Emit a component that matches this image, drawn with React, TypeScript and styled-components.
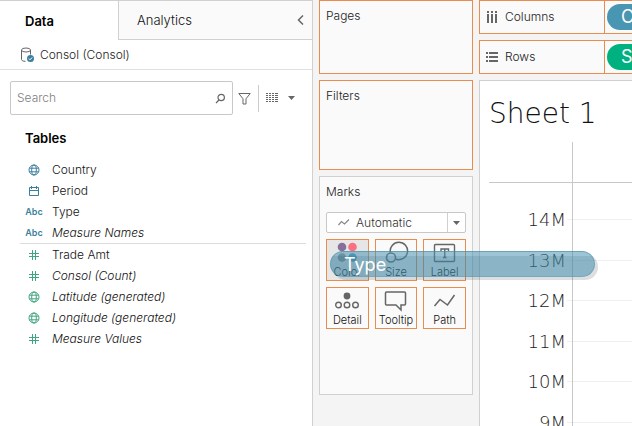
import React from "react";
import styled, { createGlobalStyle, css } from "styled-components";

const ORANGE = "#eb8c4f";
const LINE = "#d0d0d0";
const BLUE = "#3b7f9e";
const GREEN = "#3fa57e";
const ICON = "#666";

const GlobalStyle = createGlobalStyle`
  * { box-sizing: border-box; }
  body {
    margin: 0;
    overflow: hidden;
    font-family: Inter, Roboto, sans-serif;
    font-size: 12px;
    font-weight: 300;
    line-height: 16px;
    color: #111;
  }
  button, input { font: inherit; color: inherit; }
  button { padding: 0; border: 0; background: none; cursor: pointer; }
  svg { display: block; flex: none; }
`;

const Workspace = styled.div`
  display: grid;
  grid-template-columns: 313px 166px minmax(0, 1fr);
  height: 100vh;
  overflow: hidden;
  background: #f4f4f4;
`;

/* ---------- Data pane ---------- */

const DataPane = styled.aside`
  display: flex;
  flex-direction: column;
  border-top: 1px solid ${LINE};
  border-right: 1px solid ${LINE};
  background: #fff;
`;

const TabBar = styled.div`
  display: flex;
  height: 39px;
`;

const Tab = styled.button<{ $active?: boolean }>`
  font-size: 13px;
  ${(p) =>
    p.$active
      ? css`
          width: 118px;
          padding: 0 0 0 25px;
          text-align: left;
          font-weight: 600;
          color: #000;
        `
      : css`
          padding: 0 0 0 18px;
          border-left: 1px solid ${LINE};
          border-bottom: 1px solid ${LINE};
          background: #fafafa;
        `}
`;

const CollapseButton = styled.button`
  display: flex;
  flex: 1;
  align-items: center;
  justify-content: flex-end;
  padding-right: 8px;
  border-bottom: 1px solid ${LINE};
  background: #fafafa;
`;

const DataSource = styled.div`
  display: flex;
  align-items: center;
  gap: 6px;
  height: 30px;
  padding-left: 20px;
  border-bottom: 1px solid #e0e0e0;
  color: #222;
`;

const SearchRow = styled.div`
  display: flex;
  align-items: center;
  height: 34px;
  margin: 11px 17px 0 10px;
`;

const SearchField = styled.label`
  display: flex;
  flex: 1;
  align-items: center;
  height: 34px;
  min-width: 0;
  padding: 0 6px;
  border: 1px solid #c8c8c8;
  border-radius: 2px;
`;

const SearchInput = styled.input`
  flex: 1;
  min-width: 0;
  padding: 0;
  border: 0;
  outline: 0;
  background: none;
  &::placeholder { color: #808080; opacity: 1; }
`;

const FilterButton = styled.button`
  padding: 0 7px 0 5px;
`;

const ViewButton = styled.button`
  display: flex;
  align-items: center;
  gap: 10px;
  height: 27px;
  padding-left: 7px;
  border-left: 1px solid #ccc;
`;

const SectionTitle = styled.h2`
  margin: 14px 0 12px 25px;
  font-size: 13px;
  line-height: 18px;
  font-weight: 600;
  color: #000;
`;

const FieldList = styled.ul`
  margin: 0 6px 0 20px;
  padding: 0;
  list-style: none;
  & + & { border-top: 1px solid #dcdcdc; }
`;

const Field = styled.li<{ $italic?: boolean }>`
  display: grid;
  grid-template-columns: 28px 1fr;
  column-gap: 4px;
  align-items: center;
  height: 21px;
  font-style: ${(p) => (p.$italic ? "italic" : "normal")};
`;

const FieldIcon = styled.span<{ $color: string }>`
  display: flex;
  justify-content: center;
  color: ${(p) => p.$color};
  font-size: 9px;
  font-style: normal;
  font-weight: 600;
`;

/* ---------- Cards ---------- */

const CardColumn = styled.div`
  display: flex;
  flex-direction: column;
  gap: 6px;
  padding: 0 6px;
`;

const Card = styled.section<{ $height: number; $drop?: boolean }>`
  height: ${(p) => p.$height}px;
  padding: 6px;
  border: 1px solid ${(p) => (p.$drop ? ORANGE : LINE)};
  background: #fafafa;
`;

const CardTitle = styled.h3`
  margin: 0;
  font-size: 12px;
  line-height: 18px;
  font-weight: 300;
  color: #222;
`;

const MarkType = styled.button`
  display: flex;
  align-items: center;
  width: 100%;
  height: 21px;
  margin: 11px 0 6px;
  border: 1px solid #c8c8c8;
  border-radius: 2px;
  background: #fff;
  color: #333;
`;

const MarkTypeLabel = styled.span`
  flex: 1;
  padding-left: 6px;
  text-align: left;
`;

const MarkTypeArrow = styled.span`
  display: flex;
  align-items: center;
  justify-content: center;
  width: 18px;
  height: 19px;
  border-left: 1px solid ${LINE};
`;

const MarkGrid = styled.div`
  display: grid;
  grid-template-columns: repeat(3, minmax(0, 1fr));
  gap: 6px;
`;

const MarkButton = styled.button<{ $hot?: boolean }>`
  display: flex;
  flex-direction: column;
  align-items: center;
  justify-content: space-between;
  height: 42px;
  border: 1px solid ${ORANGE};
  background: ${(p) => (p.$hot ? "#e6e6e6" : "#fafafa")};
  font-size: 11px;
  line-height: 16px;
  white-space: nowrap;
`;

const DragPill = styled.div`
  position: absolute;
  left: 330px;
  top: 251px;
  width: 265px;
  height: 26px;
  padding-left: 13px;
  border: 1px solid rgba(72, 145, 174, 0.5);
  border-radius: 13px;
  background: linear-gradient(rgba(75, 148, 178, 0.55) 4px, rgba(62, 132, 160, 0.6) 4px);
  box-shadow: 3px 3px 0 rgba(0, 0, 0, 0.13);
  color: #fff;
  font-size: 18px;
  font-weight: 400;
  line-height: 25px;
`;

/* ---------- Shelves and view ---------- */

const Main = styled.main`
  display: flex;
  flex-direction: column;
  gap: 6px;
  min-width: 0;
`;

const Shelf = styled.div`
  display: flex;
  height: 34px;
  border: 1px solid ${ORANGE};
  border-right: 0;
  background: #fafafa;
`;

const ShelfLabel = styled.div`
  display: flex;
  flex: none;
  align-items: center;
  gap: 7px;
  width: 125px;
  padding-left: 6px;
  border-right: 1px solid ${ORANGE};
  color: #222;
`;

const ShelfTrack = styled.div`
  flex: 1;
  min-width: 0;
  padding: 3px 0 0 2px;
  overflow: hidden;
`;

const ShelfPill = styled.div<{ $color: string }>`
  width: 240px;
  height: 26px;
  padding-left: 14px;
  border-radius: 13px;
  background: ${(p) => p.$color};
  color: #fff;
  font-size: 18px;
  font-weight: 400;
  line-height: 26px;
`;

const Sheet = styled.section`
  display: flex;
  flex: 1;
  flex-direction: column;
  min-height: 0;
  padding-left: 9px;
  border-top: 1px solid ${LINE};
  border-left: 1px solid ${LINE};
  background: #fff;
`;

const SheetTitle = styled.h1`
  margin: 12px 0 9px;
  font-family: "DejaVu Sans", sans-serif;
  font-size: 28px;
  line-height: 42px;
  height: 40px;
  font-weight: 200;
  color: #111;
`;

const Chart = styled.svg`
  flex: 1;
  width: 100%;
  min-height: 0;
  font-family: "DejaVu Sans", sans-serif;
  font-size: 18px;
  font-weight: 200;
`;

/* ---------- Icons ---------- */

const Globe = () => (
  <svg width="12" height="12" viewBox="0 0 12 12" fill="none" stroke="currentColor">
    <circle cx="6" cy="6" r="5" />
    <ellipse cx="6" cy="6" rx="2.3" ry="5" />
    <path d="M1.5 4.2h9M1.5 7.8h9" />
  </svg>
);
const Calendar = () => (
  <svg width="12" height="12" viewBox="0 0 12 12" fill="none" stroke="currentColor">
    <path d="M1.5 2.5h9v8h-9zM1.5 5.5h9M3.5 1v3M8.5 1v3" />
  </svg>
);
const Hash = () => (
  <svg width="12" height="12" viewBox="0 0 12 12" fill="none" stroke="currentColor">
    <path d="M1 4.5h10M1 7.5h10M4.5 1v10M7.5 1v10" />
  </svg>
);
const Caret = () => (
  <svg width="7" height="4" viewBox="0 0 7 4" fill={ICON}>
    <path d="M0 0h7L3.5 4z" />
  </svg>
);
const Database = () => (
  <svg width="14" height="16" viewBox="0 0 14 16" fill="none" stroke={ICON}>
    <ellipse cx="6" cy="3" rx="4.5" ry="2" />
    <path d="M1.5 3v9.5c0 1 1.8 1.8 4 1.9M10.5 3v4.5" />
    <circle cx="10.5" cy="11.5" r="3.5" fill={BLUE} stroke="none" />
    <path d="M8.8 11.5l1.2 1.3 2.2-2.4" stroke="#fff" />
  </svg>
);

type FieldData = { name: string; kind: "globe" | "date" | "abc" | "num"; italic?: boolean };

const dimensions: FieldData[] = [
  { name: "Country", kind: "globe" },
  { name: "Period", kind: "date" },
  { name: "Type", kind: "abc" },
  { name: "Measure Names", kind: "abc", italic: true },
];
const measures: FieldData[] = [
  { name: "Trade Amt", kind: "num" },
  { name: "Consol (Count)", kind: "num", italic: true },
  { name: "Latitude (generated)", kind: "globe", italic: true },
  { name: "Longitude (generated)", kind: "globe", italic: true },
  { name: "Measure Values", kind: "num", italic: true },
];
const kindIcon = { globe: <Globe />, date: <Calendar />, abc: "Abc", num: <Hash /> };

const Fields = ({ items, color }: { items: FieldData[]; color: string }) => (
  <FieldList>
    {items.map((f) => (
      <Field key={f.name} $italic={f.italic}>
        <FieldIcon $color={color}>{kindIcon[f.kind]}</FieldIcon>
        {f.name}
      </Field>
    ))}
  </FieldList>
);

const marks = [
  {
    name: "Color",
    icon: (
      <>
        <circle cx="8" cy="7" r="4.3" fill="#876f99" />
        <circle cx="18.5" cy="7" r="4.3" fill="#fb6f80" />
        <circle cx="8" cy="17.5" r="4.3" fill="#8e8e8e" />
        <circle cx="18.5" cy="17.5" r="4.3" fill="#4d94bd" />
      </>
    ),
  },
  {
    name: "Size",
    icon: (
      <g fill="none" stroke={ICON} strokeWidth="1.5">
        <path d="M8.3 12.5A8.7 8.7 0 1 1 14 19.2" />
        <circle cx="9" cy="17.5" r="4.5" />
      </g>
    ),
  },
  {
    name: "Label",
    icon: (
      <g fill="none" stroke={ICON} strokeWidth="1.4">
        <rect x="3.5" y="4.5" width="20" height="17" rx="1" />
        <path d="M10 11V9h7.5v2M13.75 9v8.5M12 17.5h3.5" />
      </g>
    ),
  },
  {
    name: "Detail",
    icon: (
      <g fill="none" stroke={ICON} strokeWidth="1.4">
        <circle cx="13" cy="8" r="3.4" fill={ICON} stroke="none" />
        <circle cx="4.5" cy="17" r="2.8" />
        <circle cx="13" cy="17" r="2.8" />
        <circle cx="21.5" cy="17" r="2.8" />
      </g>
    ),
  },
  {
    name: "Tooltip",
    icon: (
      <path
        d="M4.5 4h18a1 1 0 0 1 1 1v11a1 1 0 0 1-1 1H19v5l-5-5H4.5a1 1 0 0 1-1-1V5a1 1 0 0 1 1-1z"
        fill="none"
        stroke={ICON}
        strokeWidth="1.5"
      />
    ),
  },
  {
    name: "Path",
    icon: <path d="M3.5 18L9 11.5l7.5 5.500 7-10" fill="none" stroke={ICON} strokeWidth="1.5" />,
  },
];

const ticks = [14, 13, 12, 11, 10, 9];
const tickY = (i: number) => Math.round(77 + i * 40.6);

export default function App() {
  return (
    <>
      <GlobalStyle />
      <Workspace>
        <DataPane>
          <TabBar>
            <Tab $active>Data</Tab>
            <Tab>Analytics</Tab>
            <CollapseButton aria-label="Collapse pane">
              <svg width="7" height="10" viewBox="0 0 7 10" fill="none" stroke={ICON} strokeWidth="1.5">
                <path d="M6 .5L1.5 5 6 9.5" />
              </svg>
            </CollapseButton>
          </TabBar>
          <DataSource>
            <Database />
            Consol (Consol)
          </DataSource>
          <SearchRow>
            <SearchField>
              <SearchInput placeholder="Search" aria-label="Search" />
              <svg width="11" height="11" viewBox="0 0 11 11" fill="none" stroke={ICON} strokeWidth="1.2">
                <circle cx="6.2" cy="4.5" r="3.2" />
                <path d="M4 7L1 10" />
              </svg>
            </SearchField>
            <FilterButton aria-label="Filter">
              <svg width="13" height="13" viewBox="0 0 13 13" fill="none" stroke={ICON}>
                <path d="M.8 1.5h11.4L8 6.8V12H5V6.8z" />
              </svg>
            </FilterButton>
            <ViewButton aria-label="View options">
              <svg width="12" height="10" viewBox="0 0 12 10" fill="none" stroke={ICON}>
                <path d="M0 .5h2M0 2.5h2M0 4.5h2M0 6.5h2M0 8.5h2M3 .5h2M3 2.5h2M3 4.5h2M3 6.5h2M3 8.5h2M6 .5h2M6 2.5h2M6 4.5h2M6 6.5h2M6 8.5h2M9 .5h3M9 2.5h3M9 4.5h3M9 6.5h3M9 8.5h3" />
              </svg>
              <Caret />
            </ViewButton>
          </SearchRow>
          <SectionTitle>Tables</SectionTitle>
          <Fields items={dimensions} color={BLUE} />
          <Fields items={measures} color={GREEN} />
        </DataPane>

        <CardColumn>
          <Card $height={74} $drop>
            <CardTitle>Pages</CardTitle>
          </Card>
          <Card $height={90} $drop>
            <CardTitle>Filters</CardTitle>
          </Card>
          <Card $height={219}>
            <CardTitle>Marks</CardTitle>
            <MarkType aria-haspopup="listbox">
              <svg width="23" height="11" viewBox="0 0 23 11" fill="none" stroke="#888" strokeWidth="1.2">
                <path d="M11.5 8l3-3.500 3 2.500 4.500-4.500" />
              </svg>
              <MarkTypeLabel>Automatic</MarkTypeLabel>
              <MarkTypeArrow>
                <Caret />
              </MarkTypeArrow>
            </MarkType>
            <MarkGrid>
              {marks.map((m) => (
                <MarkButton key={m.name} $hot={m.name === "Color"}>
                  <svg width="27" height="24" viewBox="0 0 27 24">
                    {m.icon}
                  </svg>
                  {m.name}
                </MarkButton>
              ))}
            </MarkGrid>
          </Card>
        </CardColumn>

        <Main>
          <Shelf>
            <ShelfLabel>
              <svg width="12" height="12" viewBox="0 0 12 12" fill={ICON}>
                <path d="M1 0h2v2H1zM5 0h2v2H5zM9 0h2v2H9zM1 3h2v9H1zM5 3h2v9H5zM9 3h2v9H9z" />
              </svg>
              Columns
            </ShelfLabel>
            <ShelfTrack>
              <ShelfPill $color="#4996b2">Country</ShelfPill>
            </ShelfTrack>
          </Shelf>
          <Shelf>
            <ShelfLabel>
              <svg width="12" height="12" viewBox="0 0 12 12" fill={ICON}>
                <path d="M0 1h2v2H0zM0 5h2v2H0zM0 9h2v2H0zM3 1h9v2H3zM3 5h9v2H3zM3 9h9v2H3z" />
              </svg>
              Rows
            </ShelfLabel>
            <ShelfTrack>
              <ShelfPill $color="#00b180">SUM(Trade Amt)</ShelfPill>
            </ShelfTrack>
          </Shelf>
          <Sheet>
            <SheetTitle>Sheet 1</SheetTitle>
            <Chart aria-label="Trade Amt axis">
              {ticks.map((t, i) => (
                <g key={t}>
                  <line x1="78" x2="100%" y1={tickY(i) + 0.5} y2={tickY(i) + 0.5} stroke="#efefef" />
                  <text x="77" y={tickY(i) + 7} textAnchor="end" fill="#222">
                    {t}M
                  </text>
                </g>
              ))}
              <path d="M83.5 0v2000M0 40.5h4000" stroke="#c8c8c8" />
            </Chart>
          </Sheet>
        </Main>
      </Workspace>
      <DragPill>Type</DragPill>
    </>
  );
}
